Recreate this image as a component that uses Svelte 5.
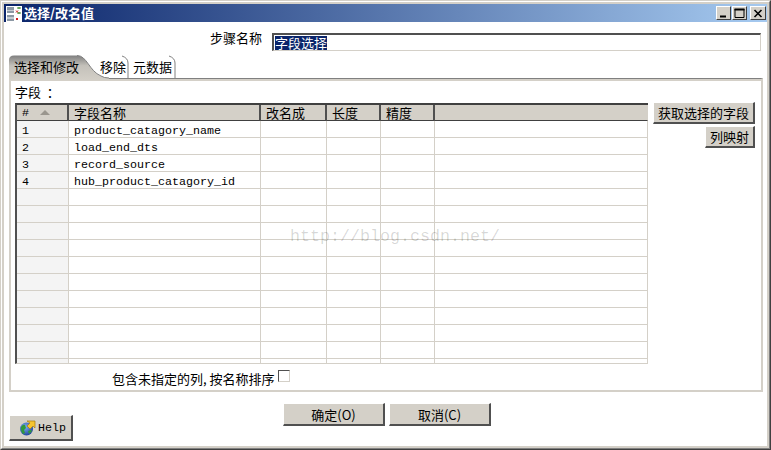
<script>
  const names = ['product_catagory_name', 'load_end_dts', 'record_source', 'hub_product_catagory_id'];
  const rows = Array.from({ length: 15 }, (_, i) => ({ n: i < 4 ? i + 1 : '', name: names[i] ?? '' }));
  const heads = ['字段名称', '改名成', '长度', '精度', ''];
</script>

<div class="window">
  <div class="frame">
    <div class="content">
      <header class="title">
        <svg class="appicon" width="16" height="16" viewBox="0 0 16 16">
          <rect width="16" height="16" fill="#fff" />
          <path d="M1 1h7v3H1zM1 4.500h7v2.500H1z" fill="#8c98a4" />
          <path d="M1 9h7v2.500H1zM1 12.500h7V15H1z" fill="#8c98a4" />
          <path d="M11 2h4M13 1v2M11 7h4M13 6v2" stroke="#3a8a2a" />
          <path d="M10 4.500l2 2M12 4.500l-2 2M10 12l2 2M12 12l-2 2" stroke="#d02020" />
        </svg>
        <span class="caption">选择/改名值</span>
        <div class="controls">
          <span class="ctl"><svg width="9" height="9" viewBox="0 0 9 9"><path d="M1 7.500h6" stroke="#000" stroke-width="2" /></svg></span>
          <span class="ctl"><svg width="11" height="10" viewBox="0 0 11 10"><path d="M1 1v8.500h9V1" stroke="#000" fill="none" stroke-width="1" /><path d="M.5 1.500h10" stroke="#000" stroke-width="2"/></svg></span>
          <span class="ctl close"><svg width="10" height="9" viewBox="0 0 10 9"><path d="M1.500 1l7 7M8.500 1l-7 7" stroke="#000" stroke-width="1.600" /></svg></span>
        </div>
      </header>

      <div class="step">
        <span class="step-label">步骤名称</span>
        <div class="input"><span class="sel">字段选择</span></div>
      </div>

      <nav class="tabs">
        <svg class="tabart" width="200" height="25" viewBox="0 0 200 25">
          <defs>
            <linearGradient id="act" x1="0" y1="0" x2="0" y2="1">
              <stop offset="0" stop-color="#7f7f7f" />
              <stop offset=".4" stop-color="#c4c1ba" />
              <stop offset="1" stop-color="#d4d0c8" />
            </linearGradient>
          </defs>
          <path d="M0 26V5Q0 .5 5 .5H68C78 .5 80 16 92 21Q95 23 100 23V26Z" fill="url(#act)" />
          <path d="M68 .5C78 .5 80 16 92 21Q95 23 100 23" stroke="#808080" fill="none" />
          <path d="M113 1Q119 3 119 8V23M160 1Q166 3 166 8V23" stroke="#808080" fill="none" />
        </svg>
        <span class="tab first">选择和修改</span>
        <span class="tab second">移除</span>
        <span class="tab third">元数据</span>
      </nav>

      <section class="panel">
        <div class="fields-label">字段&nbsp;&nbsp;：</div>
        <div class="main">
          <div class="grid">
            <table>
              <colgroup>
                <col style="width:52px" /><col style="width:192px" /><col style="width:66px" />
                <col style="width:54px" /><col style="width:54px" /><col style="width:213px" />
              </colgroup>
              <thead>
                <tr>
                  <th class="hash">#<i class="sort"></i></th>
                  {#each heads as h}<th>{h}</th>{/each}
                </tr>
              </thead>
              <tbody>
                {#each rows as r}
                  <tr>
                    <td class="num">{r.n}</td>
                    <td class="name">{r.name}</td>
                    <td></td><td></td><td></td><td></td>
                  </tr>
                {/each}
              </tbody>
            </table>
            <div class="watermark">http://blog.csdn.net/</div>
          </div>
          <div class="side">
            <button class="btn wide">获取选择的字段</button>
            <button class="btn narrow">列映射</button>
          </div>
        </div>
        <label class="check">
          <span>包含未指定的列, 按名称排序</span>
          <i class="box"></i>
        </label>
      </section>

      <footer class="foot">
        <button class="btn help">
          <svg width="17" height="17" viewBox="0 0 17 17">
            <defs>
              <radialGradient id="globe" cx=".4" cy=".35" r=".7">
                <stop offset="0" stop-color="#7fb0f0" />
                <stop offset="1" stop-color="#1c3f9a" />
              </radialGradient>
            </defs>
            <circle cx="7.500" cy="10" r="6.500" fill="url(#globe)" />
            <path d="M2 8q2-3 4-2l1 3-2 2 1 3-2 1Q1.500 12 2 8zM9 12l3-1 1 1-3 3z" fill="#2f9a3a" />
            <path d="M8 2h8v7l-2-2-3 3-3-3 3-3z" fill="#f6c430" stroke="#a87a10" stroke-width=".7" />
          </svg>
          <span>Help</span>
        </button>
        <div class="actions">
          <button class="btn act">确定(O)</button>
          <button class="btn act">取消(C)</button>
        </div>
      </footer>
    </div>
  </div>
</div>

<style>
  :global(body) { margin: 0; background: #fff; }
  * { box-sizing: border-box; }
  .window {
    width: 771px; height: 450px; overflow: hidden;
    border: 1px solid #d4d0c8; border-right-color: #404040; border-bottom-color: #404040;
    font: 13px "Noto Sans CJK SC", "Liberation Sans", sans-serif; color: #000;
  }
  .frame {
    height: 100%;
    border: 1px solid #fff; border-right-color: #808080; border-bottom-color: #808080;
    padding: 2px; background: #d4d0c8;
  }
  .content { height: 100%; background: #fff; display: flex; flex-direction: column; }
  .title {
    flex: none; height: 18px; display: flex; align-items: center;
    background: linear-gradient(90deg, #0a246a, #a6caf0); color: #fff;
    padding: 0 1px 0 2px;
  }
  .appicon { flex: none; margin-top: 1px; }
  .caption { font-weight: 700; font-size: 13px; margin-left: 2px; line-height: 18px; }
  .controls { margin-left: auto; display: flex; gap: 1px; }
  .ctl {
    width: 15px; height: 14px; background: #d4d0c8; display: flex; align-items: center; justify-content: center;
    border: 1px solid; border-color: #fff #404040 #404040 #fff;
  }
  .close { margin-left: 2px; width: 16px; }
  .step { flex: none; display: flex; margin-top: 11px; margin-left: 206px; height: 18px; }
  .step-label { width: 62px; line-height: 10px; }
  .input {
    width: 489px; height: 18px; border: 1px solid #d4d0c8; border-top: 2px solid #505050; border-left: 2px solid #505050;
    padding-left: 1px; display: flex; align-items: center;
  }
  .sel { background: #0a246a; color: #fff; width: 52px; height: 14px; line-height: 14px; white-space: nowrap; }
  .tabs { position: relative; flex: none; margin: 4px 0 0 5px; height: 23px; display: flex; line-height: 23px; }
  .tabart { position: absolute; left: 0; top: 0; z-index: 1; }
  .tab { position: relative; z-index: 2; white-space: nowrap; }
  .first { margin-left: 5px; width: 86px; }
  .second { width: 33px; }
  .panel {
    flex: none; height: 314px; width: 754px; margin-left: 5px; padding: 2px 0 0 4px;
    border: 2px solid #d4d0c8; border-top: 1px solid #808080; box-shadow: inset 0 2px 0 #d4d0c8;
  }
  .fields-label { height: 22px; line-height: 20px; padding-top: 1px; }
  .main { display: flex; gap: 5px; }
  .grid {
    position: relative; width: 633px; height: 261px; overflow: hidden; flex: none;
    border-top: 2px solid #404040; border-left: 2px solid #505050; border-bottom: 1px solid #d4d0c8;
  }
  table { border-collapse: separate; border-spacing: 0; table-layout: fixed; width: 631px; }
  th {
    height: 16px; padding: 0 0 0 5px; background: #d4d0c8; text-align: left; font-weight: 400; line-height: 15px;
    border-right: 2px solid #505050; border-bottom: 1px solid #404040; white-space: nowrap;
  }
  th:last-child { border-right: 1px solid #d4d0c8; }
  .hash { font: 11.700px/13px "Liberation Mono", monospace; padding-top: 2px; }
  .sort {
    display: inline-block; margin-left: 11px; vertical-align: 1px; width: 0; height: 0;
    border: 5px solid transparent; border-top: 0; border-bottom: 5px solid #9a968e;
  }
  td {
    height: 17px; padding: 4px 0 0; border-right: 1px solid #d4d0c8; border-bottom: 1px solid #d4d0c8;
    font: 11.670px/12px "Liberation Mono", monospace; white-space: nowrap; overflow: hidden;
  }
  .num { background: #f4f4f4; padding-left: 5px; }
  .name { padding-left: 5px; }
  .watermark {
    position: absolute; left: 273px; top: 121px; pointer-events: none;
    font: 16.670px/22px "Liberation Mono", monospace; color: rgba(0, 0, 0, .16);
  }
  .side { display: flex; flex-direction: column; align-items: flex-end; gap: 2px; width: 102px; margin-top: -1px; }
  .btn {
    display: flex; align-items: center; justify-content: center; padding: 0; cursor: default;
    background: #d4d0c8; color: #000; font: inherit;
    border: 0; border-right: 2px solid #505050; border-bottom: 2px solid #505050;
    border-top: 1px solid #fff; border-left: 1px solid #fff;
  }
  .wide { width: 102px; height: 22px; }
  .narrow { width: 50px; height: 22px; }
  .check { display: flex; align-items: flex-start; margin: 6px 0 0 97px; height: 20px; }
  .check span { line-height: 18px; width: 166px; white-space: nowrap; }
  .box {
    width: 12px; height: 12px; margin-top: 0; background: #fff;
    border: 1px solid #d4d0c8; border-top-color: #505050; border-left-color: #505050;
  }
  .foot { flex: 1; display: flex; padding-left: 5px; align-items: flex-start; }
  .help {
    width: 64px; height: 26px; margin-top: 23px; gap: 2px; justify-content: flex-start; padding-left: 9px;
    font: 11.670px "Liberation Mono", monospace;
  }
  .help svg { margin-top: -1px; flex: none; }
  .actions { display: flex; gap: 4px; margin: 11px 0 0 210px; }
  .act { width: 102px; height: 23px; }
</style>
